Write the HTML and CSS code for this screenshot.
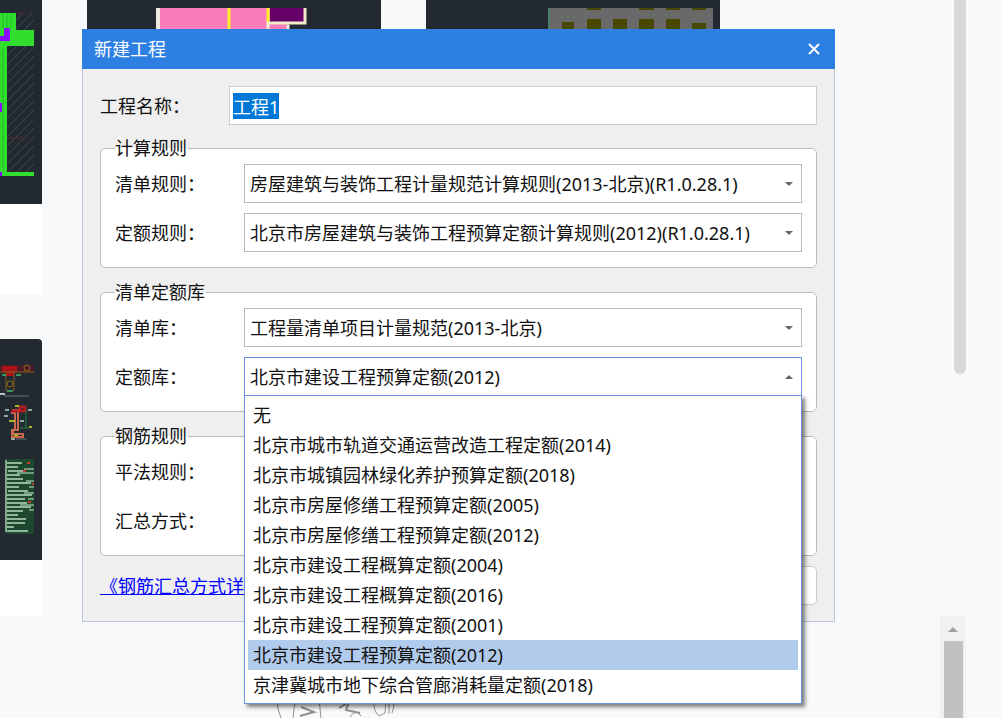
FILE: index.html
```
<!DOCTYPE html>
<html lang="zh-CN">
<head>
  <meta charset="UTF-8" />
  <meta name="viewport" content="width=device-width, initial-scale=1.0"/>
  <title>新建工程</title>
  <link rel="stylesheet" href="styles.css">
</head>
<body>

<div class="page">
  <div class="gallery">
    <div class="card">
      <svg class="thumb" viewBox="0 0 42 204" preserveAspectRatio="xMinYMin slice" aria-hidden="true">
        <defs>
          <pattern id="hatch" width="9" height="9" patternUnits="userSpaceOnUse">
            <path d="M-1 10L10 -1M-1 1L1 -1M8 10L10 8" stroke="#40474d" stroke-width="1"/>
          </pattern>
        </defs>
        <rect x="7" y="13" width="27" height="160" fill="url(#hatch)"/>
        <path d="M0 13H16V30H34V46H7V172H34V176H0Z" fill="#30df2e"/>
        <path d="M3 14V28M7 14V28M11 14V28M3 48V170" stroke="#27b52c"/>
        <path d="M0 36H4V28H10V41H0ZM0 103H2V112H0ZM0 172H2V176H0Z" fill="#8d0bff"/>
        <path d="M17 13H25M7 138H25" stroke="#5a2830"/>
      </svg>
      <div class="card-info"></div>
    </div>
    <div class="card">
      <svg class="thumb" viewBox="0 0 294 204" preserveAspectRatio="xMinYMin slice" aria-hidden="true">
        <rect x="70" y="8" width="132" height="100" fill="#fa7dba"/>
        <path d="M71 8V108" stroke="#eee9dc" stroke-width="4"/>
        <path d="M142 8V108M181 8V24" stroke="#ffed2b" stroke-width="3"/>
        <rect x="183" y="8" width="34" height="14" fill="#650068"/>
        <path d="M218 8V23H181V30" fill="none" stroke="#f3eccb" stroke-width="3"/>
        <path d="M201 25V108" stroke="#eee9dc" stroke-width="3"/>
      </svg>
    </div>
    <div class="card">
      <svg class="thumb" viewBox="0 0 294 204" preserveAspectRatio="xMinYMin slice" aria-hidden="true">
        <rect x="122" y="8" width="165" height="100" fill="#696969"/>
        <path d="M123 8V108" stroke="#4a8069" stroke-width="2"/>
        <path d="M136 22H148V34H136ZM161 19H175V34H161ZM187 19H201V34H187ZM213 19H228V34H213ZM240 19H254V34H240ZM266 23H280V34H266ZM161 8H175V10H161ZM213 8H228V10H213ZM240 8H254V10H240ZM266 8H280V10H266Z" fill="#484800"/>
      </svg>
    </div>
    <div class="card">
      <svg class="thumb thumb-tall" viewBox="0 0 42 221" preserveAspectRatio="xMinYMin slice" aria-hidden="true">
        <path d="M0 26H34V33H0Z" fill="#4d1c29"/>
        <path d="M2 27H17V33H14V37H6V33H2Z" fill="#aa1418"/>
        <path d="M0 33H34M6 33V52M14 33V52" stroke="#8c5a20" fill="none"/>
        <circle cx="10" cy="45" r="3" fill="none" stroke="#8d6a17"/>
        <circle cx="27" cy="29" r="3" fill="none" stroke="#8d6a17"/>
        <path d="M2 36H6M16 36H21M7 52H13" stroke="#3c9660" stroke-width="2"/>
        <path d="M0 55H5" stroke="#bcc4c4" stroke-width="2"/>
        <path d="M4 57H29M16 100H27" stroke="#69747a"/>
        <path d="M13 71H18V91H13V95H23V98H12V91H15V74H12Z" fill="none" stroke="#ca684e" stroke-width="2"/>
        <path d="M11 72H18M20 68H25V72H20Z" stroke="#b01d24" stroke-width="3"/>
        <path d="M26 71V89M20 89H29" stroke="#1e833c"/>
        <path d="M9 82H15M15 67H19M14 96H18M29 88H32" stroke="#a9b52a" stroke-width="2"/>
        <path d="M5 71H9M4 77H8M20 82H24M11 100H15M28 71H32" stroke="#8ca7a4" stroke-width="2"/>
        <path d="M5 120H34V195H5Z" fill="#1d482d"/>
        <path d="M6 124H22M7 128H18M8 132H26M7 136H20M7 140H23M7 144H31M7 148H19M8 152H28M7 156H32M7 160H25M7 164H27M7 168H31M7 172H23M7 176H18M7 180H26M7 184H25M7 188H14M7 192H28" stroke="#94b59c" stroke-width="2"/>
        <path d="M24 130H34M17 134H34M26 142H34M29 148H34M24 154H34M28 160H34M20 166H34M29 171H34" stroke="#6f9c7b" stroke-width="2"/>
        <path d="M6 121V193" stroke="#83a889" stroke-width="2"/>
        <path d="M27 124H30M23 132H26M32 145H34M28 163H31" stroke="#c43b2c" stroke-width="2"/>
      </svg>
      <div class="card-info card-info-short"></div>
    </div>
  </div>

  <div class="rail">
    <div class="rail-thumb"></div>
    <div class="scroller">
      <span class="arrow arrow-up"></span>
      <div class="scroller-thumb"></div>
    </div>
  </div>
</div>

<svg class="sketch" viewBox="0 0 140 28" aria-hidden="true" fill="none" stroke="#8f9193" stroke-width="1">
  <path d="M17 8Q17 20 21 28M33 28L35 10Q47 6 59 9L61 28M34 14Q46 10 60 14M114 10Q113 21 119 26L125 23L126 9M129 11V24M129 13Q137 8 132 23M90 27Q96 18 101 26"/>
  <path d="M41 17L54 22L40 26M79 18L89 12L86 20L100 23" stroke-width="2"/>
</svg>

<form class="dialog" role="dialog" aria-labelledby="dialogTitle">
  <div class="dialog-header">
    <h2 id="dialogTitle">新建工程</h2>
    <button type="button" class="close" aria-label="关闭">
      <svg viewBox="0 0 12 12" width="12" height="12"><path d="M1 1L11 11M11 1L1 11" stroke="#fff" stroke-width="2"/></svg>
    </button>
  </div>

  <div class="dialog-body">
    <div class="row">
      <label for="projectName">工程名称：</label>
      <input type="text" id="projectName" value="工程1" spellcheck="false" />
    </div>

    <fieldset>
      <legend>计算规则</legend>
      <div class="rows">
        <div class="row">
          <label for="listRule">清单规则：</label>
          <div class="select">
            <select id="listRule"><option>房屋建筑与装饰工程计量规范计算规则(2013-北京)(R1.0.28.1)</option></select>
          </div>
        </div>
        <div class="row">
          <label for="quotaRule">定额规则：</label>
          <div class="select">
            <select id="quotaRule"><option>北京市房屋建筑与装饰工程预算定额计算规则(2012)(R1.0.28.1)</option></select>
          </div>
        </div>
      </div>
    </fieldset>

    <fieldset>
      <legend>清单定额库</legend>
      <div class="rows">
        <div class="row">
          <label for="listLib">清单库：</label>
          <div class="select">
            <select id="listLib"><option>工程量清单项目计量规范(2013-北京)</option></select>
          </div>
        </div>
        <div class="row">
          <label for="quotaLib">定额库：</label>
          <div class="select open">
            <select id="quotaLib"><option>北京市建设工程预算定额(2012)</option></select>
            <ul class="menu" role="listbox" aria-label="定额库">
              <li role="option">无</li>
              <li role="option">北京市城市轨道交通运营改造工程定额(2014)</li>
              <li role="option">北京市城镇园林绿化养护预算定额(2018)</li>
              <li role="option">北京市房屋修缮工程预算定额(2005)</li>
              <li role="option">北京市房屋修缮工程预算定额(2012)</li>
              <li role="option">北京市建设工程概算定额(2004)</li>
              <li role="option">北京市建设工程概算定额(2016)</li>
              <li role="option">北京市建设工程预算定额(2001)</li>
              <li role="option" class="selected" aria-selected="true">北京市建设工程预算定额(2012)</li>
              <li role="option">京津冀城市地下综合管廊消耗量定额(2018)</li>
            </ul>
          </div>
        </div>
      </div>
    </fieldset>

    <fieldset>
      <legend>钢筋规则</legend>
      <div class="rows">
        <div class="row">
          <label for="drawingRule">平法规则：</label>
          <div class="select"><select id="drawingRule"></select></div>
        </div>
        <div class="row">
          <label for="summaryMode">汇总方式：</label>
          <div class="select"><select id="summaryMode"></select></div>
        </div>
      </div>
    </fieldset>

    <div class="dialog-footer">
      <a href="#">《钢筋汇总方式详</a>
      <button type="submit" class="submit" aria-label="创建工程"></button>
    </div>
  </div>
</form>

<script>
  window.onload = () => {
    const name = document.getElementById("projectName");
    name.focus();
    name.select();
  };
</script>

</body>
</html>
```
FILE: styles.css
```
* {
  box-sizing: border-box;
}

body {
  margin: 0;
  height: 100vh;
  overflow: hidden;
  position: relative;
  background: #f8f9fb;
  color: #111;
  font-family: "Noto Sans", "Noto Sans CJK SC", sans-serif;
  font-size: 18px;
  line-height: 24px;
}

/* page behind the dialog */

.page {
  display: flex;
  justify-content: space-between;
  height: 100%;
}

.gallery {
  display: grid;
  grid-template-columns: 42px 294px 294px;
  gap: 45px;
  align-content: start;
}

.card {
  background: #fff;
}

.thumb {
  display: block;
  width: 100%;
  height: 204px;
  background: #222930;
}

.thumb-tall {
  height: 221px;
  border-top-right-radius: 4px;
}

.card-info {
  height: 90px;
}

.card-info-short {
  height: 56px;
}

.rail {
  display: flex;
  flex-direction: column;
  justify-content: space-between;
  width: 26px;
  margin-right: 36px;
}

.rail-thumb {
  align-self: flex-end;
  width: 12px;
  height: 374px;
  border-radius: 0 0 6px 6px;
  background: #d8d8d8;
}

.scroller {
  display: flex;
  flex-direction: column;
  align-items: center;
  gap: 9px;
  height: 102px;
  padding-top: 11px;
  background: #f1f1f1;
}

.scroller-thumb {
  flex: 1;
  width: 19px;
  background: #c1c1c1;
}

.arrow-up {
  border: 5px solid transparent;
  border-top: none;
  border-bottom: 5px solid #a0a0a0;
}

.sketch {
  position: absolute;
  left: 260px;
  bottom: 0;
  width: 140px;
  height: 28px;
}

/* dialog */

.dialog {
  position: absolute;
  top: 29px;
  left: 82px;
  right: 167px;
}

.dialog-header {
  display: flex;
  align-items: center;
  justify-content: space-between;
  height: 40px;
  padding: 0 15px 0 12px;
  background: #2d80e2;
  color: #fff;
}

.dialog-header h2 {
  margin: 0;
  font-size: 18px;
  font-weight: normal;
}

.close {
  display: flex;
  padding: 0;
  border: none;
  background: none;
  cursor: pointer;
}

.dialog-body {
  padding: 17px 17px 16px;
  border: 1px solid #bcc6d9;
  border-top: none;
  background: #efefef;
}

.row {
  display: grid;
  grid-template-columns: 129px 1fr;
  align-items: center;
}

.rows {
  display: grid;
  gap: 10px;
}

input,
select {
  width: 100%;
  height: 39px;
  padding: 0 5px;
  border: 1px solid #b9b9b9;
  border-radius: 0;
  outline: none;
  background: #fff;
  color: #111;
  font: inherit;
}

input {
  padding: 0 3px;
  border-color: #cccdd1;
}

input::selection {
  background: #0078d7;
  color: #fff;
}

fieldset {
  min-width: 0;
  margin: 11px 0 0;
  padding: 4px 14px 15px;
  border: 1px solid #bbb;
  border-radius: 5px;
  background: #fff;
}

fieldset + fieldset {
  margin-top: 12px;
}

legend {
  padding: 0 1px 0 0;
}

.select {
  display: grid;
  align-items: center;
  position: relative;
}

.select select {
  grid-area: 1 / 1;
  appearance: none;
}

.select::after {
  content: "";
  grid-area: 1 / 1;
  justify-self: end;
  margin-right: 9px;
  border: 4px solid transparent;
  border-top-color: #666;
  border-bottom: none;
  pointer-events: none;
}

.select.open select {
  border-color: #6b93e0;
}

.select.open::after {
  border-top: none;
  border-bottom: 4px solid #666;
}

.menu {
  position: absolute;
  top: calc(100% - 1px);
  left: 0;
  right: 0;
  z-index: 1;
  margin: 0;
  padding: 4px 3px 3px;
  border: 1px solid #6b93e0;
  background: #fff;
  box-shadow: 3px 3px 4px rgba(0, 0, 0, 0.5);
  list-style: none;
}

.menu li {
  padding: 3px 5px;
  cursor: pointer;
}

.menu li.selected {
  background: #b1cbec;
}

.dialog-footer {
  display: flex;
  align-items: center;
  justify-content: space-between;
  margin-top: 10px;
}

.dialog-footer a {
  color: #00f;
}

.submit {
  width: 130px;
  height: 39px;
  border: 1px solid #ccc;
  border-radius: 5px;
  background: #fff;
}
```
